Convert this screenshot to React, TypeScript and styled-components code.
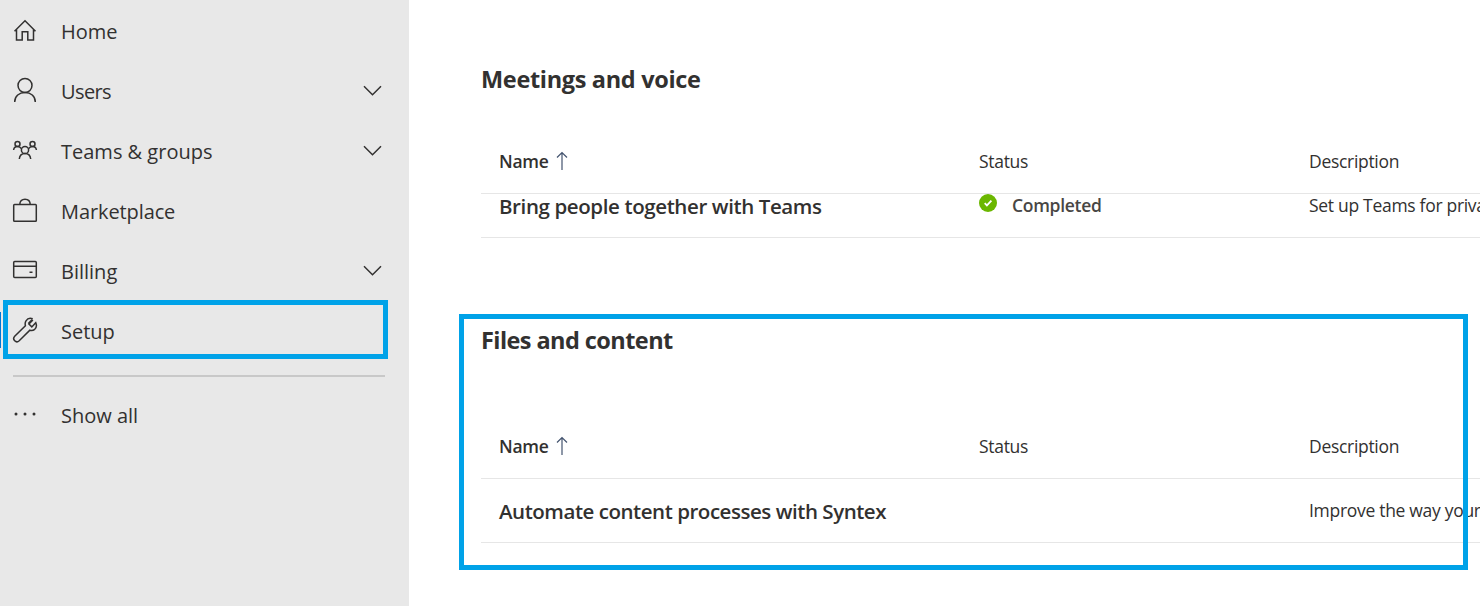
import React from "react";
import styled, { createGlobalStyle } from "styled-components";

const GlobalStyle = createGlobalStyle`
  * { box-sizing: border-box; }
  body {
    margin: 0;
    overflow: hidden;
    background: #fff;
    color: #323130;
    font-family: "Open Sans", "Noto Sans", sans-serif;
  }
`;

const Page = styled.div`
  display: flex;
  width: 1480px;
  height: 606px;
  overflow: hidden;
`;

const Sidebar = styled.nav`
  flex: 0 0 409px;
  padding-top: 1px;
  background: #e8e8e8;
`;

const NavItem = styled.div`
  position: relative;
  display: flex;
  align-items: center;
  height: 60px;
  padding: 0 24px 0 12px;
`;

const NavIcon = styled.svg`
  flex: none;
  width: 26px;
  height: 30px;
  margin: -2px 23px 0 0;
  fill: none;
  stroke: #323130;
  stroke-width: 1.5;
`;

const NavLabel = styled.span<{ $tracking?: number }>`
  flex: 1;
  padding-top: 2px;
  font-size: 20px;
  line-height: 28px;
  white-space: nowrap;
  letter-spacing: ${(p) => p.$tracking ?? 0}px;
`;

const Chevron = styled.svg`
  width: 24px;
  height: 14px;
  fill: none;
  stroke: #323130;
  stroke-width: 1.5;
`;

const ActiveBar = styled.span`
  position: absolute;
  left: 0;
  top: 11px;
  width: 1px;
  height: 36px;
  background: #0078d4;
`;

const NavOutline = styled.span`
  position: absolute;
  left: 3px;
  top: -1px;
  width: 385px;
  height: 59px;
  border: 5px solid #00a2e8;
`;

const Divider = styled.hr`
  height: 2px;
  margin: 14px 24px 8px 13px;
  border: 0;
  background: #c8c8c8;
`;

const Main = styled.main`
  flex: 1;
  min-width: 0;
  padding: 53px 0 0 50px;
`;

const Section = styled.section<{ $gap?: number }>`
  position: relative;
  margin-top: ${(p) => p.$gap ?? 0}px;
  padding-left: 22px;
`;

const SectionOutline = styled.span`
  position: absolute;
  left: 0;
  top: 0;
  width: 1009px;
  height: 256px;
  border: 5px solid #00a2e8;
`;

const Heading = styled.h2<{ $tracking: number }>`
  height: 52px;
  margin: 0;
  font-size: 23.5px;
  font-weight: 700;
  line-height: 52px;
  letter-spacing: ${(p) => p.$tracking}px;
`;

const Row = styled.div<{ $height: number; $top?: number; $bottom?: number }>`
  display: grid;
  grid-template-columns: 480px 330px 400px;
  align-items: center;
  align-content: center;
  height: ${(p) => p.$height}px;
  padding: ${(p) => p.$top ?? 0}px 0 ${(p) => p.$bottom ?? 0}px 18px;
  border-bottom: 1px solid #e6e6e6;
  white-space: nowrap;
`;

const Cell = styled.div`
  display: flex;
  align-items: center;
`;

const Text = styled.span<{ $weight?: number; $color?: string }>`
  font-size: 17.5px;
  font-weight: ${(p) => p.$weight ?? 400};
  letter-spacing: -0.3px;
  color: ${(p) => p.$color ?? "#323130"};
  line-height: 24px;
`;

const RowTitle = styled.span<{ $tracking: number }>`
  padding-top: 2px;
  font-size: 20.5px;
  font-weight: 600;
  letter-spacing: ${(p) => p.$tracking}px;
  line-height: 24px;
`;

const SortIcon = styled.svg`
  width: 12px;
  height: 20px;
  margin-left: 8px;
  fill: none;
  stroke: #44546f;
  stroke-width: 1.2;
`;

const StatusIcon = styled.svg`
  width: 18px;
  height: 18px;
  margin: -4px 15px 0 0;
`;

const icons: Record<string, React.ReactNode> = {
  home: <path d="M2.500 16.200 13 5.800 23.500 16.200M4.500 14.500V25h5.700v-8.300h5.600V25h5.700V14.500" />,
  users: (
    <>
      <circle cx="13" cy="10.500" r="7" />
      <path d="M2.700 27C2.700 21 7.300 17.500 13 17.500s10.300 3.500 10.300 9.500" />
    </>
  ),
  teams: (
    <>
      <circle cx="5.500" cy="9" r="2.500" />
      <circle cx="20.500" cy="9" r="2.500" />
      <circle cx="13" cy="15" r="3.600" />
      <path d="M1.600 15c.3-2.400 1.800-3.500 3.900-3.500 1.800 0 3.100.8 3.900 2.200M24.400 15c-.3-2.400-1.800-3.500-3.900-3.500-1.800 0-3.100.8-3.900 2.200M7.300 24c.3-3.200 2.500-5.400 5.700-5.400s5.400 2.200 5.700 5.400" />
    </>
  ),
  market: (
    <>
      <rect x="1.700" y="9.600" width="22.600" height="16.600" rx=".8" />
      <path d="M7.800 9.600c0-3.500 2-5.300 5.200-5.300s5.200 1.800 5.200 5.300" />
    </>
  ),
  billing: (
    <>
      <rect x="1.700" y="6.600" width="22.600" height="15.800" rx="1" />
      <path d="M1.700 11.200h22.600M17.500 17.300h3" />
    </>
  ),
  setup: (
    <path d="M20.700 3.800c-2.500-1-5.300-.2-6.700 2-1 1.500-1 3.200-.6 4.900L2.700 21.300c-1.300 1.400-1.200 3.300 0 4.500s3.200 1.200 4.500 0L17.900 15.200c1.700.5 3.400.2 4.800-.9 1.700-1.500 2.100-4.200 1.100-6.600l-4 4.200-2.900-2.800 4-4.200M20.200 4.600l-3.900 3.900" />
  ),
  more: (
    <g fill="#323130" stroke="none">
      <circle cx="4" cy="15" r="1.500" />
      <circle cx="13" cy="15" r="1.500" />
      <circle cx="22" cy="15" r="1.500" />
    </g>
  ),
};

const navItems = [
  { icon: "home", label: "Home" },
  { icon: "users", label: "Users", expandable: true, tracking: -0.6 },
  { icon: "teams", label: "Teams & groups", expandable: true },
  { icon: "market", label: "Marketplace", tracking: -0.1 },
  { icon: "billing", label: "Billing", expandable: true },
  { icon: "setup", label: "Setup", active: true },
];

function HeaderRow({ height, top }: { height: number; top: number }) {
  return (
    <Row $height={height} $top={top}>
      <Cell>
        <Text $weight={600}>Name</Text>
        <SortIcon viewBox="0 0 12 20">
          <path d="M6 19V2M1 6.500 6 1.500l5 5" />
        </SortIcon>
      </Cell>
      <Text>Status</Text>
      <Text>Description</Text>
    </Row>
  );
}

export default function App() {
  return (
    <Page>
      <GlobalStyle />
      <Sidebar>
        {navItems.map((item) => (
          <NavItem key={item.label}>
            {item.active && <ActiveBar />}
            {item.active && <NavOutline />}
            <NavIcon viewBox="0 0 26 30">{icons[item.icon]}</NavIcon>
            <NavLabel $tracking={item.tracking}>{item.label}</NavLabel>
            {item.expandable && (
              <Chevron viewBox="0 0 24 14">
                <path d="M3 2.300 11.500 10.800 20 2.300" />
              </Chevron>
            )}
          </NavItem>
        ))}
        <Divider />
        <NavItem>
          <NavIcon viewBox="0 0 26 30">{icons.more}</NavIcon>
          <NavLabel>Show all</NavLabel>
        </NavItem>
      </Sidebar>
      <Main>
        <Section>
          <Heading $tracking={-0.33}>Meetings and voice</Heading>
          <HeaderRow height={89} top={24} />
          <Row $height={44} $bottom={21}>
            <RowTitle $tracking={-0.39}>Bring people together with Teams</RowTitle>
            <Cell>
              <StatusIcon viewBox="0 0 18 18">
                <circle cx="9" cy="9" r="9" fill="#6bb700" />
                <path d="m5.700 9.200 2.200 2.200 4.500-4.700" fill="none" stroke="#fff" strokeWidth="1.800" />
              </StatusIcon>
              <Text $weight={600} $color="#484644">Completed</Text>
            </Cell>
            <Text>Set up Teams for private</Text>
          </Row>
        </Section>
        <Section $gap={76}>
          <Heading $tracking={-0.57}>Files and content</Heading>
          <HeaderRow height={113} top={48} />
          <Row $height={64} $bottom={1}>
            <RowTitle $tracking={-0.46}>Automate content processes with Syntex</RowTitle>
            <span />
            <Text>Improve the way your</Text>
          </Row>
          <SectionOutline />
        </Section>
      </Main>
    </Page>
  );
}
